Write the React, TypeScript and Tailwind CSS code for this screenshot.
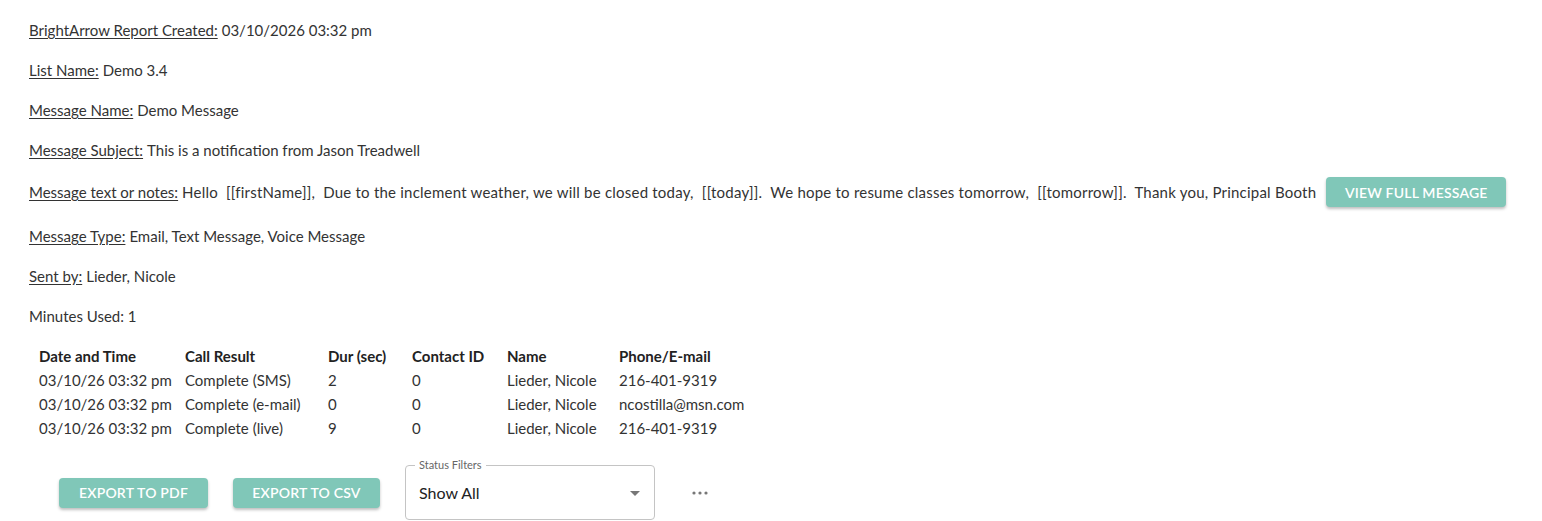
const rows = [
  { date: "03/10/26 03:32 pm", result: "Complete (SMS)", dur: "2", contact: "0", name: "Lieder, Nicole", phone: "216-401-9319" },
  { date: "03/10/26 03:32 pm", result: "Complete (e-mail)", dur: "0", contact: "0", name: "Lieder, Nicole", phone: "ncostilla@msn.com" },
  { date: "03/10/26 03:32 pm", result: "Complete (live)", dur: "9", contact: "0", name: "Lieder, Nicole", phone: "216-401-9319" },
];

function Field({ label, children }: { label: string; children?: React.ReactNode }) {
  return (
    <p className="flex h-10 items-center">
      <span className="underline underline-offset-2">{label}</span>
      <span className="ml-1">{children}</span>
    </p>
  );
}

function TealButton({ children, className = "" }: { children: React.ReactNode; className?: string }) {
  return (
    <button
      type="button"
      className={`h-[30px] rounded-[4px] bg-[#80c7b8] text-[14px] font-semibold uppercase tracking-[0.2px] text-white shadow-[0_2px_3px_rgba(0,0,0,0.25)] ${className}`}
    >
      {children}
    </button>
  );
}

export default function App() {
  return (
    <div className="min-h-[521px] bg-white px-[29px] pt-[10px] text-[15px] text-[#333] [font-family:Lato,'Noto_Sans',sans-serif]">
      <Field label="BrightArrow Report Created:">03/10/2026 03:32 pm</Field>
      <Field label="List Name:">Demo 3.4</Field>
      <Field label="Message Name:">Demo Message</Field>
      <Field label="Message Subject:">This is a notification from Jason Treadwell</Field>
      <div className="flex h-[46px] items-center pb-[2px]">
        <span className="underline underline-offset-2">Message text or notes:</span>
        <span className="ml-1 whitespace-pre tracking-[0.22px]">
          Hello  [[firstName]],  Due to the inclement weather, we will be closed today,  [[today]].  We hope to resume classes tomorrow,  [[tomorrow]].  Thank you, Principal Booth
        </span>
        <TealButton className="ml-[10px] w-[180px]">View Full Message</TealButton>
      </div>
      <Field label="Message Type:">Email, Text Message, Voice Message</Field>
      <Field label="Sent by:">Lieder, Nicole</Field>
      <p className="flex h-10 items-center">Minutes Used: 1</p>

      <table className="ml-[10px] mt-[8px] border-collapse text-left">
        <thead>
          <tr className="h-6 font-bold text-[#222]">
            <th className="w-[146px]">Date and Time</th>
            <th className="w-[143px]">Call Result</th>
            <th className="w-[84px]">Dur (sec)</th>
            <th className="w-[95px]">Contact ID</th>
            <th className="w-[112px]">Name</th>
            <th>Phone/E-mail</th>
          </tr>
        </thead>
        <tbody>
          {rows.map((r, i) => (
            <tr key={i} className="h-6">
              <td>{r.date}</td>
              <td>{r.result}</td>
              <td>{r.dur}</td>
              <td>{r.contact}</td>
              <td>{r.name}</td>
              <td>{r.phone}</td>
            </tr>
          ))}
        </tbody>
      </table>

      <div className="mt-[25px] flex items-center">
        <TealButton className="ml-[30px] w-[149px]">Export to PDF</TealButton>
        <TealButton className="ml-[25px] w-[147px]">Export to CSV</TealButton>
        <div className="relative ml-[25px] flex h-[55px] w-[250px] items-center rounded-[4px] border border-[#c4c4c4] pl-[13px] pr-[14px]">
          <span className="absolute -top-[8px] left-[9px] bg-white px-[4px] text-[11px] leading-[14px] text-[#666]">Status Filters</span>
          <span className="flex-1 text-[16px] text-[#222]">Show All</span>
          <svg width="10" height="5" viewBox="0 0 10 5" className="mt-[1px]">
            <path d="M0 0h10L5 5z" fill="#777" />
          </svg>
        </div>
        <svg width="16" height="4" viewBox="0 0 16 4" className="ml-[37px]">
          <circle cx="2" cy="2" r="1.6" fill="#777" />
          <circle cx="8" cy="2" r="1.6" fill="#777" />
          <circle cx="14" cy="2" r="1.6" fill="#777" />
        </svg>
      </div>
    </div>
  );
}
